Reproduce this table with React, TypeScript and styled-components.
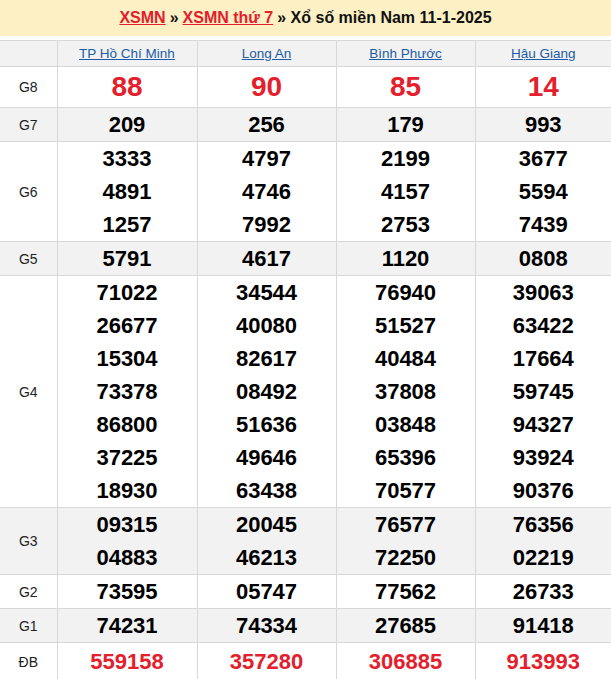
import React from "react";
import styled, { createGlobalStyle } from "styled-components";

const Global = createGlobalStyle`
  html, body { margin: 0; padding: 0; background: #fff; }
  body { font-family: "Liberation Sans", Arial, sans-serif; color: #000; }
`;

const Page = styled.div`
  width: 611px;
  overflow: hidden;
`;

const TitleBar = styled.h1`
  margin: 0 0 4px 0;
  height: 36px;
  background: #fdf0c4;
  display: flex;
  align-items: center;
  justify-content: center;
  font-size: 16px;
  font-weight: bold;
  color: #111;
  gap: 4px;
`;

const TitleLink = styled.a`
  color: #e2202b;
  text-decoration: underline;
`;

const Table = styled.table`
  width: 611px;
  table-layout: fixed;
  border-collapse: collapse;
  border-top: 1px solid #d8d8d8;
`;

const Row = styled.tr<{ $shaded?: boolean }>`
  background: ${(p) => (p.$shaded ? "#f2f2f2" : "#fff")};
`;

const HeadCell = styled.th`
  height: 25px;
  padding: 0;
  border: 1px solid #d8d8d8;
  font-weight: normal;
  font-size: 13.5px;
  text-align: center;
  &:first-child { border-left: none; }
  &:last-child { border-right: none; }
`;

const ProvinceLink = styled.a`
  color: #1b5ba6;
  text-decoration: underline;
`;

const Label = styled.td`
  padding: 0;
  border: 1px solid #d8d8d8;
  border-left: none;
  text-align: center;
  font-size: 14px;
  color: #222;
`;

const Cell = styled.td`
  padding: 0;
  border: 1px solid #d8d8d8;
  text-align: center;
  vertical-align: middle;
  &:last-child { border-right: none; }
`;

const Num = styled.div<{ $size: "big" | "normal" | "special" }>`
  font-weight: bold;
  font-size: ${(p) => (p.$size === "big" ? "28px" : "22px")};
  line-height: ${(p) =>
    p.$size === "big" ? "40px" : p.$size === "special" ? "38px" : "33px"};
  color: ${(p) => (p.$size === "normal" ? "#000" : "#e3202b")};
`;

const provinces = ["TP Hồ Chí Minh", "Long An", "Bình Phước", "Hậu Giang"];

type Prize = { label: string; size: "big" | "normal" | "special"; cols: string[][] };

const prizes: Prize[] = [
  { label: "G8", size: "big", cols: [["88"], ["90"], ["85"], ["14"]] },
  { label: "G7", size: "normal", cols: [["209"], ["256"], ["179"], ["993"]] },
  {
    label: "G6",
    size: "normal",
    cols: [
      ["3333", "4891", "1257"],
      ["4797", "4746", "7992"],
      ["2199", "4157", "2753"],
      ["3677", "5594", "7439"],
    ],
  },
  { label: "G5", size: "normal", cols: [["5791"], ["4617"], ["1120"], ["0808"]] },
  {
    label: "G4",
    size: "normal",
    cols: [
      ["71022", "26677", "15304", "73378", "86800", "37225", "18930"],
      ["34544", "40080", "82617", "08492", "51636", "49646", "63438"],
      ["76940", "51527", "40484", "37808", "03848", "65396", "70577"],
      ["39063", "63422", "17664", "59745", "94327", "93924", "90376"],
    ],
  },
  {
    label: "G3",
    size: "normal",
    cols: [
      ["09315", "04883"],
      ["20045", "46213"],
      ["76577", "72250"],
      ["76356", "02219"],
    ],
  },
  { label: "G2", size: "normal", cols: [["73595"], ["05747"], ["77562"], ["26733"]] },
  { label: "G1", size: "normal", cols: [["74231"], ["74334"], ["27685"], ["91418"]] },
  { label: "ĐB", size: "special", cols: [["559158"], ["357280"], ["306885"], ["913993"]] },
];

export default function App() {
  return (
    <Page>
      <Global />
      <TitleBar>
        <TitleLink href="#">XSMN</TitleLink>
        <span>»</span>
        <TitleLink href="#">XSMN thứ 7</TitleLink>
        <span>» Xổ số miền Nam 11-1-2025</span>
      </TitleBar>
      <Table>
        <colgroup>
          <col style={{ width: 57 }} />
          <col style={{ width: 140 }} />
          <col style={{ width: 139 }} />
          <col style={{ width: 139 }} />
          <col style={{ width: 136 }} />
        </colgroup>
        <thead>
          <Row $shaded>
            <HeadCell />
            {provinces.map((p) => (
              <HeadCell key={p}>
                <ProvinceLink href="#">{p}</ProvinceLink>
              </HeadCell>
            ))}
          </Row>
        </thead>
        <tbody>
          {prizes.map((pr, i) => (
            <Row key={pr.label} $shaded={i % 2 === 1}>
              <Label>{pr.label}</Label>
              {pr.cols.map((c, j) => (
                <Cell key={j}>
                  {c.map((n, k) => (
                    <Num key={k} $size={pr.size}>
                      {n}
                    </Num>
                  ))}
                </Cell>
              ))}
            </Row>
          ))}
        </tbody>
      </Table>
    </Page>
  );
}
